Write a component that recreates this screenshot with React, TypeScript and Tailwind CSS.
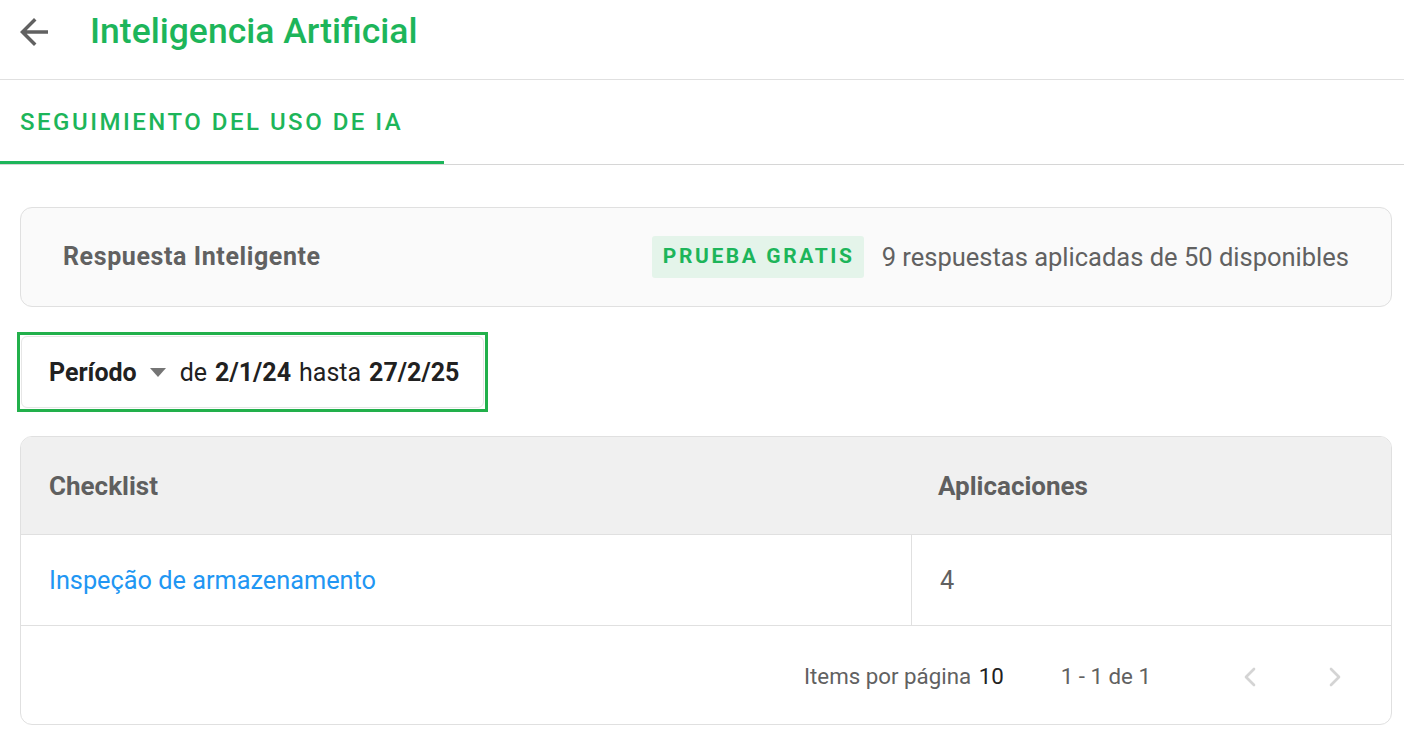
import { ChevronLeft, ChevronRight } from "lucide-react";

const rows = [{ checklist: "Inspeção de armazenamento", applications: 4 }];

function Header() {
  return (
    <header className="flex h-[80px] items-center border-b border-[#e0e0e0] pb-[16px]">
      <button className="ml-[13px] flex items-center justify-center text-[#616161]">
        <svg width="42" height="42" viewBox="0 0 24 24" fill="currentColor">
          <path d="M20 11H7.83l5.59-5.59L12 4l-8 8 8 8 1.41-1.41L7.83 13H20v-2z" />
        </svg>
      </button>
      <h1 className="ml-[35px] text-[35.5px] font-medium text-[#1db55a]">Inteligencia Artificial</h1>
    </header>
  );
}

function Tabs() {
  return (
    <nav className="flex h-[85px] border-b border-[#d6d6d6]">
      <div className="flex w-[444px] flex-col border-b-[3px] border-[#1db55a]">
        <span className="flex flex-1 items-center pl-[20px] pt-[2px] text-[24px] font-medium tracking-[2.5px] text-[#1db55a]">
          SEGUIMIENTO DEL USO DE IA
        </span>
      </div>
    </nav>
  );
}

function UsageCard() {
  return (
    <div className="flex h-[100px] items-center justify-between rounded-xl border border-[#e0e0e0] bg-[#fafafa] px-[42px]">
      <span className="text-[25px] font-bold tracking-[0.6px] text-[#616161]">Respuesta Inteligente</span>
      <div className="flex items-center gap-[18px]">
        <span className="flex h-[42px] items-center rounded-[3px] bg-[#e4f4ea] pl-[11px] pr-[9px] text-[21px] font-bold tracking-[2.6px] text-[#1db55a]">
          PRUEBA GRATIS
        </span>
        <span className="text-[25.5px] text-[#616161]">9 respuestas aplicadas de 50 disponibles</span>
      </div>
    </div>
  );
}

function PeriodFilter() {
  return (
    <div className="w-[471px] border-[3px] border-[#22b04b] p-[1px]">
      <div className="flex h-[72px] items-center rounded-md border border-[#e6e6e6] bg-white pl-[27px] pt-[1px] text-[25px] text-[#212121]">
        <span className="font-bold">Período</span>
        <svg width="16" height="9" viewBox="0 0 16 9" className="ml-[13px] mr-[14px]">
          <path d="M0 0 L16 0 L8 9 Z" fill="#757575" />
        </svg>
        <span>de</span>
        <span className="ml-[8px] font-bold">2/1/24</span>
        <span className="ml-[8px]">hasta</span>
        <span className="ml-[8px] font-bold">27/2/25</span>
      </div>
    </div>
  );
}

function UsageTable() {
  return (
    <div className="overflow-hidden rounded-xl border border-[#e0e0e0]">
      <div className="grid h-[98px] grid-cols-[890px_1fr] items-center border-b border-[#e0e0e0] bg-[#f0f0f0] pt-[2px] text-[26px] font-bold text-[#5f5f5f]">
        <span className="pl-[28px]">Checklist</span>
        <span className="pl-[27px]">Aplicaciones</span>
      </div>
      {rows.map((row) => (
        <div key={row.checklist} className="grid h-[91px] grid-cols-[890px_1fr] border-b border-[#e0e0e0] text-[25.3px]">
          <span className="flex items-center pl-[28px] pt-[2px] text-[#2196f3]">{row.checklist}</span>
          <span className="flex items-center border-l border-[#e0e0e0] pl-[28px] pt-[2px] text-[#616161]">
            {row.applications}
          </span>
        </div>
      ))}
      <div className="flex h-[98px] items-center justify-end pr-[40px] pt-[4px] text-[22.3px] text-[#616161]">
        <span>
          Items por página <span className="ml-[2px] text-[#212121]">10</span>
        </span>
        <span className="ml-[57px]">1 - 1 de 1</span>
        <ChevronLeft size={32} strokeWidth={2} className="ml-[83px] text-[#d4d4d4]" />
        <ChevronRight size={32} strokeWidth={2} className="ml-[53px] text-[#d4d4d4]" />
      </div>
    </div>
  );
}

export default function App() {
  return (
    <div className="min-h-screen bg-white font-['Roboto',sans-serif]">
      <Header />
      <Tabs />
      <main className="flex flex-col px-[20px] pr-[12px] pt-[42px]">
        <UsageCard />
        <div className="mt-[25px]">
          <div className="-ml-[3px]">
            <PeriodFilter />
          </div>
        </div>
        <div className="mt-[24px]">
          <UsageTable />
        </div>
      </main>
    </div>
  );
}
